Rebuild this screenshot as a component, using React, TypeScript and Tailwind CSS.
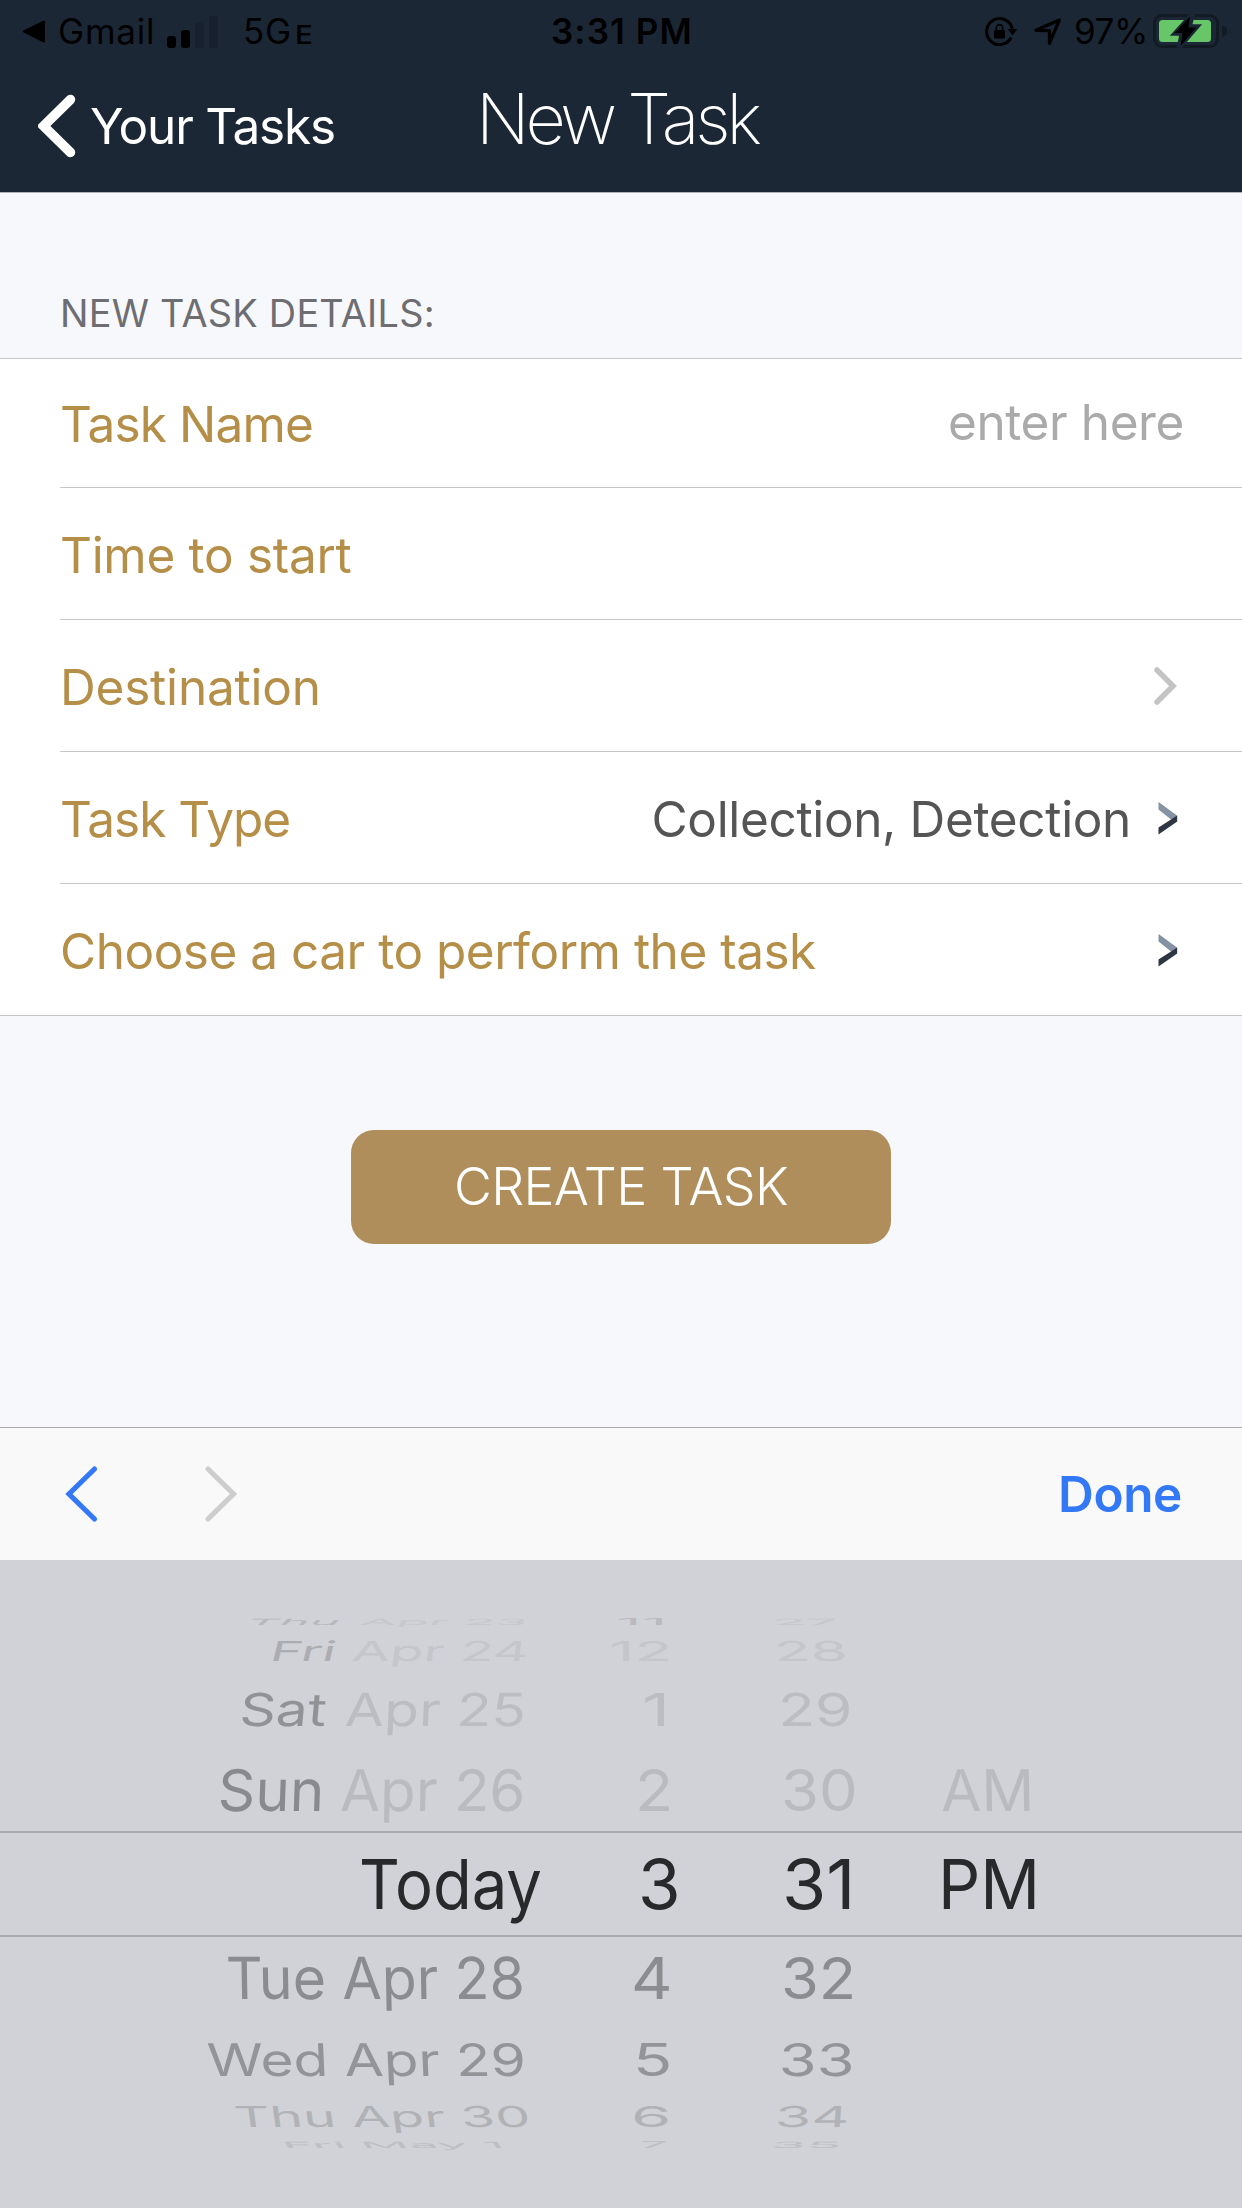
import type { ReactNode } from "react";

function StatusBar() {
  return (
    <div className="grid h-[62px] grid-cols-[35px_109px_76px_308px_434px_49px_40px_79px_1fr] items-center whitespace-nowrap pl-[23px] text-[35px] leading-[63px] text-black">
      <svg className="h-[23px] w-[23px]" viewBox="0 0 23 23">
        <path d="M1 11.5 21 1.5v20z" fill="#000" stroke="#000" strokeWidth="2" strokeLinejoin="round" />
      </svg>
      <span className="tracking-[0.77px]">Gmail</span>
      <svg className="h-[32px] w-[51px]" viewBox="0 0 51 32">
        <rect x="0" y="20" width="9" height="12" rx="3" />
        <rect x="14" y="14" width="9" height="18" rx="3" />
        <rect x="28" y="7" width="9" height="25" rx="3" fill="#16212d" />
        <rect x="42" y="0" width="9" height="32" rx="3" fill="#16212d" />
      </svg>
      <span className="tracking-[0.72px]">
        5G<span className="ml-[3.5px] inline-block origin-left scale-x-[1.16] text-[25.5px] font-medium leading-none">E</span>
      </span>
      <span className="font-semibold tracking-[1.1px]">3:31 PM</span>
      <svg className="h-[32px] w-[34px]" viewBox="0 0 34 32">
        <path d="M26.2 21.5A13 13 0 1 1 27.4 13" fill="none" stroke="#000" strokeWidth="3" />
        <path d="M22.6 13h9.6l-4.7 6.6z" />
        <rect x="9" y="14" width="11" height="8.6" rx="1.5" />
        <path d="M11.3 14.5v-2.3a3.2 3.5 0 0 1 6.4 0v2.3" fill="none" stroke="#000" strokeWidth="1.7" />
      </svg>
      <svg className="h-[28px] w-[28px]" viewBox="0 0 28 28">
        <path d="M2 12.3 25.3 2 15.5 25.3V12.600z" fill="none" stroke="#000" strokeWidth="3.3" strokeLinejoin="round" />
      </svg>
      <span className="tracking-[-0.41px]">97%</span>
      <svg className="mb-[2px] h-[36px] w-[74px]" viewBox="0 0 74 36">
        <rect x="1.5" y="2.5" width="63" height="31" rx="7.5" fill="none" stroke="#121a24" strokeWidth="3" />
        <path d="M69 12.5a8 6 0 0 1 0 11.5z" fill="#121a24" />
        <rect x="6" y="7" width="52" height="22" rx="3.5" fill="#67c768" />
        <path d="M36.5 2 18.5 22h8.5L24.5 34h4L47.5 12H38.5L41 2z" fill="#1c2736" stroke="#1c2736" strokeWidth="1.5" />
        <path d="M37 3.5 21.5 20H29.5L27.5 33 43.5 14.5H35.5z" fill="#000" />
      </svg>
    </div>
  );
}

function NavBar() {
  return (
    <div className="grid h-[130px] grid-cols-[476px_1fr] whitespace-nowrap text-white">
      <div className="flex h-[128px] items-center pl-[38px]">
        <svg className="h-[64px] w-[38px]" viewBox="0 0 38 64">
          <path d="M32.5 5.5 5.5 32l27 26.5" fill="none" stroke="#fff" strokeWidth="9.5" strokeLinecap="round" />
        </svg>
        <span className="ml-[14px] mt-[2px] text-[49.5px] leading-none tracking-[-1.19px]">Your Tasks</span>
      </div>
      <h1 className="text-[70px] font-extralight leading-[113px] tracking-[-4.2px] [word-spacing:-1px]">New Task</h1>
    </div>
  );
}

function FormRow({ label, tracking, height, children }: { label: string; tracking: string; height: string; children?: ReactNode }) {
  return (
    <div className="group bg-white pl-[60px]">
      <div className={`flex items-center justify-between border-b border-[#c6c6c8] pr-[60px] group-last:border-b-0 ${height}`}>
        <span className={`mt-1 whitespace-nowrap text-[49.5px] leading-none text-[#b58e47] ${tracking}`}>{label}</span>
        <div className="flex items-center">{children}</div>
      </div>
    </div>
  );
}

function DarkChevron() {
  return (
    <svg className="mr-[4px] mt-px h-[34px] w-[20px]" viewBox="0 0 20 34">
      <path d="M.5 1 19 14.5V18l-4 2L.5 8.5z" fill="#8592a3" />
      <path d="M19.2 14.5V20.5L.5 33.5V26.5z" fill="#2d3642" />
    </svg>
  );
}

interface Cell {
  text: string;
  x: number;
  sx: number;
  skew?: number;
  color?: string;
}

interface WheelLine {
  height: string;
  sy: number;
  color: string;
  cells: Cell[];
}

const WHEEL: WheelLine[] = [
  {
    height: "h-[22px]", sy: 0.125, color: "text-[#c6c7cb]",
    cells: [
      { text: "Thu", x: 247, sx: 0.745, skew: -10, color: "text-[#b7b8bc]" },
      { text: "Apr 23", x: 361, sx: 0.76, skew: -5 },
      { text: "11", x: 616, sx: 0.914, color: "text-[#b9babe]" },
      { text: "27", x: 772, sx: 0.821, skew: 3 },
    ],
  },
  {
    height: "h-[36px]", sy: 0.4, color: "text-[#c5c6ca]",
    cells: [
      { text: "Fri", x: 271, sx: 0.79, skew: -7, color: "text-[#acadb1]" },
      { text: "Apr 24", x: 352, sx: 0.8, skew: -3 },
      { text: "12", x: 609, sx: 0.904 },
      { text: "28", x: 774, sx: 0.87, skew: 2 },
    ],
  },
  {
    height: "h-[79px]", sy: 0.66, color: "text-[#bcbdc1]",
    cells: [
      { text: "Sat", x: 240, sx: 0.82, skew: -4, color: "text-[#919295]" },
      { text: "Apr 25", x: 345, sx: 0.826, skew: -2 },
      { text: "1", x: 642, sx: 1 },
      { text: "29", x: 778, sx: 0.878, skew: 1 },
    ],
  },
  {
    height: "h-[83px]", sy: 0.83, color: "text-[#babbbf]",
    cells: [
      { text: "Sun", x: 218, sx: 0.845, skew: -2, color: "text-[#898a8d]" },
      { text: "Apr 26", x: 340, sx: 0.843, skew: -1 },
      { text: "2", x: 635, sx: 0.909 },
      { text: "30", x: 781, sx: 0.89 },
      { text: "AM", x: 941, sx: 0.849, skew: 1 },
    ],
  },
  {
    height: "h-[106px] border-y-2 border-[#a8a9ae]", sy: 1, color: "text-[#28292b]",
    cells: [
      { text: "Today", x: 359, sx: 0.918 },
      { text: "3", x: 638, sx: 1 },
      { text: "31", x: 782, sx: 1.039 },
      { text: "PM", x: 938, sx: 0.96 },
    ],
  },
  {
    height: "h-[84px] -mt-px", sy: 0.84, color: "text-[#8b8c8f]",
    cells: [
      { text: "Tue Apr 28", x: 226, sx: 0.83, skew: 1 },
      { text: "4", x: 631, sx: 0.932 },
      { text: "32", x: 781, sx: 0.888 },
    ],
  },
  {
    height: "h-[79px]", sy: 0.65, color: "text-[#939497]",
    cells: [
      { text: "Wed Apr 29", x: 207, sx: 0.825, skew: 2 },
      { text: "5", x: 633, sx: 0.939 },
      { text: "33", x: 779, sx: 0.889, skew: -1 },
    ],
  },
  {
    height: "h-[33px]", sy: 0.42, color: "text-[#b1b2b6]",
    cells: [
      { text: "Thu Apr 30", x: 234, sx: 0.807, skew: 4 },
      { text: "6", x: 631, sx: 0.943 },
      { text: "34", x: 775, sx: 0.854, skew: -2 },
    ],
  },
  {
    height: "h-[26px]", sy: 0.125, color: "text-[#bebfc3]",
    cells: [
      { text: "Fri May 1", x: 282, sx: 0.77, skew: 6 },
      { text: "7", x: 640, sx: 0.72 },
      { text: "35", x: 770, sx: 0.848, skew: -3 },
    ],
  },
];

function Wheel() {
  return (
    <div className="h-[648px] overflow-hidden bg-[#d1d2d7] pt-[51px]">
      {WHEEL.map((line, i) => (
        <div key={i} className={`grid items-center ${line.height} ${line.color}`}>
          {line.cells.map((c) => (
            <span
              key={c.text}
              className={`col-start-1 row-start-1 h-0 w-max origin-left whitespace-nowrap text-[69px] leading-[0px] ${c.color ?? ""}`}
              style={{ transform: `translateX(${c.x}px) scale(${c.sx}, ${line.sy}) skewX(${c.skew ?? 0}deg)` }}
            >
              {c.text}
            </span>
          ))}
        </div>
      ))}
    </div>
  );
}

export default function App() {
  return (
    <div className="flex h-[2208px] w-[1242px] flex-col overflow-hidden bg-[#f7f8fb] font-[Inter,sans-serif]">
      <header className="border-b border-[#b2b2b2] bg-[#1c2736]">
        <StatusBar />
        <NavBar />
      </header>

      <main className="flex h-[1234px] flex-col">
        <h2 className="h-[165px] whitespace-nowrap pl-[60px] pt-[98px] text-[37.8px] leading-[45px] tracking-[0.25px] text-[#6d6d72]">
          NEW TASK DETAILS:
        </h2>
        <section className="border-y border-[#c6c6c8]">
          <FormRow label="Task Name" tracking="tracking-[-0.85px]" height="h-[129px]">
            <span className="-mr-[2px] whitespace-nowrap text-[49.5px] leading-none tracking-[-0.4px] text-[#aaaaaa]">
              enter here
            </span>
          </FormRow>
          <FormRow label="Time to start" tracking="tracking-[-0.3px]" height="h-[132px]" />
          <FormRow label="Destination" tracking="tracking-[-0.2px]" height="h-[132px]">
            <svg className="mr-[5px] mt-px h-[40px] w-[24px]" viewBox="0 0 24 40">
              <path d="M4 4l16 16L4 36" fill="none" stroke="#c4c4c6" strokeWidth="5.5" strokeLinecap="round" />
            </svg>
          </FormRow>
          <FormRow label="Task Type" tracking="tracking-[-1px]" height="h-[132px]">
            <span className="mr-[27px] mt-1 whitespace-nowrap text-[49.5px] leading-none tracking-[-0.35px] text-[#555555]">
              Collection, Detection
            </span>
            <DarkChevron />
          </FormRow>
          <FormRow label="Choose a car to perform the task" tracking="tracking-[-0.49px]" height="h-[131px]">
            <DarkChevron />
          </FormRow>
        </section>
        <button className="mt-[114px] h-[114px] w-[540px] self-center rounded-[23px] bg-[#af8e5b] text-[52px] font-light leading-[112px] tracking-[-0.65px] text-white">
          CREATE TASK
        </button>
      </main>

      <div className="flex h-[133px] items-center border-t border-[#a9a9a9] bg-[#f9f9f9] pl-[63px] pr-[60px]">
        <svg className="h-[58px] w-[36px]" viewBox="0 0 36 58">
          <path d="M31.5 4 6 29l25.5 25" fill="none" stroke="#3378f6" strokeWidth="5.2" strokeLinecap="round" />
        </svg>
        <svg className="ml-[103px] h-[58px] w-[36px]" viewBox="0 0 36 58">
          <path d="M6 4l25.5 25L6 54" fill="none" stroke="#cdcdcd" strokeWidth="5.2" strokeLinecap="round" />
        </svg>
        <span className="ml-auto mt-[2px] text-[49.5px] font-semibold leading-none tracking-[-0.39px] text-[#3378f6]">Done</span>
      </div>
      <Wheel />
    </div>
  );
}
